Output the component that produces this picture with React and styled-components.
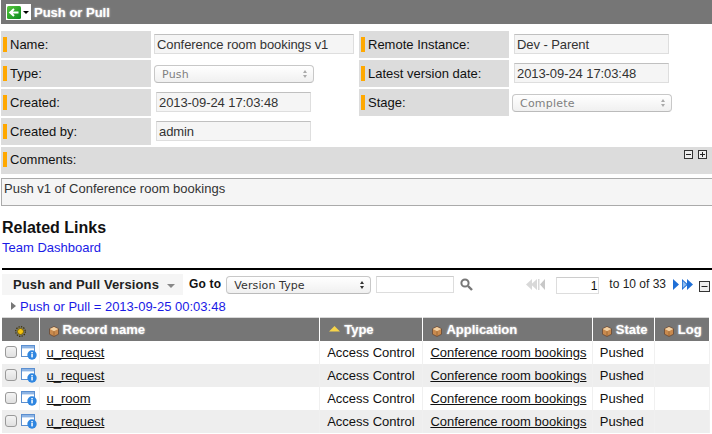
import styled, { createGlobalStyle } from 'styled-components'

const Global = createGlobalStyle`
  html, body { margin: 0; padding: 0; background: #fff; }
  body { width: 712px; height: 434px; overflow: hidden; font-family: "Liberation Sans", Arial, sans-serif; font-size: 13px; color: #111; }
`

const Page = styled.div`
  width: 712px;
  height: 434px;
  overflow: hidden;
  padding-left: 1px;
  box-sizing: border-box;
`

const TitleBar = styled.div`
  display: flex;
  align-items: center;
  height: 24px;
  background: #767676;
  padding-left: 5px;
  color: #fff;
  font-weight: bold;
  font-size: 13px;
  text-shadow: 0 0 2px #ddd;
`

const BackButton = styled.div`
  display: flex;
  align-items: center;
  width: 25px;
  height: 16px;
  background: #fff;
  margin-right: 3px;
`

const Caret = styled.span`
  width: 0;
  height: 0;
  margin-left: 2px;
  border-left: 3px solid transparent;
  border-right: 3px solid transparent;
  border-top: 3px solid #000;
`

const FormGrid = styled.div`
  display: grid;
  grid-template-columns: 150px 208px 150px 1fr;
  grid-auto-rows: 27px;
  row-gap: 2px;
  margin-top: 7px;
`

const Label = styled.div`
  display: flex;
  align-items: center;
  background: #dcdcdc;
  padding-left: 2px;
  box-sizing: border-box;
  ${p => p.$wide && 'grid-column: 1 / -1; position: relative; padding-bottom: 2px;'}
  &::before {
    content: '';
    width: 4px;
    height: 15px;
    background: #ffa800;
    margin-right: 3px;
  }
`

const Cell = styled.div`
  display: flex;
  align-items: flex-start;
  padding-left: ${p => p.$inset}px;
  padding-top: ${p => p.$top ?? 3}px;
`

const ReadOnly = styled.div`
  box-sizing: border-box;
  width: ${p => p.$w}px;
  height: ${p => p.$h ?? 20}px;
  line-height: 19px;
  padding-left: 2px;
  background: #f5f5f5;
  border: 1px solid #dedede;
  border-top-color: #c0c0c0;
  color: #333;
  letter-spacing: -0.08px;
  white-space: nowrap;
`

const MacSelect = styled.div`
  position: relative;
  box-sizing: border-box;
  width: ${p => p.$w}px;
  height: ${p => p.$h ?? 18}px;
  line-height: 17px;
  padding-left: ${p => p.$pad ?? 7}px;
  border: 1px solid #c8c8c8;
  border-bottom-color: #bbb;
  border-radius: 4px;
  background: linear-gradient(#ffffff, #f0f0f0);
  color: ${p => p.$dark ? '#333' : '#808080'};
  font-family: "DejaVu Sans", sans-serif;
  font-size: 11px;
  letter-spacing: ${p => p.$dark ? '0.1px' : '0.2px'};
  white-space: nowrap;
  &::before, &::after {
    content: '';
    position: absolute;
    right: 6px;
    border-left: 2.5px solid transparent;
    border-right: 2.5px solid transparent;
  }
  &::before {
    top: 4px;
    border-bottom: 3px solid ${p => p.$dark ? '#333' : '#aaa'};
  }
  &::after {
    top: 9px;
    border-top: 3px solid ${p => p.$dark ? '#333' : '#aaa'};
  }
`

const Collapsers = styled.div`
  position: absolute;
  right: 5px;
  top: 3px;
  display: flex;
  gap: 5px;
`

const SquareBtn = styled.svg`
  display: block;
  width: 9px;
  height: 9px;
`

const CommentBox = styled.div`
  box-sizing: border-box;
  height: 28px;
  margin: 4px 0 0 0;
  padding: 2px 0 0 2px;
  background: #f5f5f5;
  border-top: 1px solid #aaa;
  border-bottom: 1px solid #aaa;
  border-left: 1px solid #aaa;
  color: #333;
  line-height: 16px;
`

const Related = styled.div`
  margin: 13px 0 0 1px;
`

const RelatedTitle = styled.h2`
  margin: 0;
  font-size: 16px;
  line-height: 18px;
  font-weight: bold;
  color: #111;
`

const BlueLink = styled.a`
  display: block;
  color: #1a1ae6;
  line-height: 16px;
  margin-top: 3px;
`

const ListHeader = styled.div`
  display: flex;
  align-items: flex-start;
  margin: 12px 0 0 1px;
  border-top: 2px solid #000;
  padding-top: 4px;
  height: 23px;
`

const ListTitle = styled.div`
  display: flex;
  flex: none;
  align-items: center;
  box-sizing: border-box;
  width: 181px;
  height: 21px;
  padding-left: 11px;
  background: #f5f5f5;
  font-weight: bold;
  letter-spacing: 0.1px;
  color: #222;
`

const TitleCaret = styled.span`
  width: 0;
  height: 0;
  margin-left: 8px;
  margin-top: 2px;
  border-left: 4px solid transparent;
  border-right: 4px solid transparent;
  border-top: 4px solid #888;
`

const GoTo = styled.span`
  flex: none;
  font-size: 12px;
  font-weight: bold;
  line-height: 18px;
  margin: 1px 5px 0 6px;
  letter-spacing: 0.2px;
  white-space: nowrap;
`

const SelectSlot = styled.div`
  flex: none;
  margin-top: 2px;
`

const SearchInput = styled.div`
  flex: none;
  box-sizing: border-box;
  width: 78px;
  height: 17px;
  margin: 2px 5px 0 5px;
  border: 1px solid #ddd;
  border-top-color: #ccc;
`

const IconSlot = styled.svg`
  display: block;
  flex: none;
  margin-top: ${p => p.$top ?? 0}px;
  margin-left: ${p => p.$left ?? 0}px;
`

const PageInput = styled.div`
  flex: none;
  box-sizing: border-box;
  width: 43px;
  height: 17px;
  margin: 3px 0 0 10px;
  padding-right: 1px;
  border: 1px solid #ddd;
  border-top-color: #ccc;
  text-align: right;
  font-size: 12px;
  line-height: 17px;
`

const PageText = styled.span`
  flex: none;
  margin: 1px 0 0 10px;
  font-size: 12px;
  line-height: 18px;
  color: #222;
  white-space: nowrap;
`

const FilterRow = styled.div`
  display: flex;
  align-items: center;
  height: 16px;
  margin: 1px 0 0 10px;
  color: #1a1ae6;
  &::before {
    content: '';
    margin-right: 4px;
    border-top: 4px solid transparent;
    border-bottom: 4px solid transparent;
    border-left: 5px solid #777;
  }
`

const Table = styled.table`
  table-layout: fixed;
  width: 708px;
  margin: 3px 0 0 1px;
  border-collapse: collapse;
  border-top: 1px solid #d8d8d8;
`

const HeadCell = styled.th`
  height: 23px;
  padding: 0 0 0 ${p => p.$pad ?? 9}px;
  background: #767676;
  border-right: 1px solid #fff;
  color: #fff;
  font-size: 13px;
  text-align: left;
  text-shadow: 0 0 2px #ddd;
  white-space: nowrap;
  & > svg { vertical-align: -3px; margin-right: 4px; }
`

const Row = styled.tr`
  background: ${p => p.$alt ? '#eeeeee' : '#fff'};
`

const DataCell = styled.td`
  height: 23px;
  padding: 0 0 0 ${p => p.$pad ?? 7}px;
  border-right: 1px solid #f0f0f0;
  white-space: nowrap;
  color: #111;
`

const RowTools = styled.div`
  display: flex;
  align-items: center;
  gap: 4px;
`

const Check = styled.span`
  display: block;
  box-sizing: border-box;
  width: 12px;
  height: 12px;
  margin-top: -2px;
  border: 1px solid #999;
  border-radius: 3px;
  background: linear-gradient(#f4f4f4, #e0e0e0);
`

const RowLink = styled.a`
  color: #111;
  text-decoration: underline;
`

function BackArrow() {
  return (
    <svg width="14" height="13" viewBox="0 0 14 13" style={{ display: 'block', marginLeft: 1 }}>
      <defs>
        <linearGradient id="backGreen" x1="0" y1="0" x2="1" y2="1">
          <stop offset="0" stopColor="#58c83c" />
          <stop offset="1" stopColor="#0a8a1e" />
        </linearGradient>
      </defs>
      <rect width="14" height="13" rx="1.5" fill="url(#backGreen)" />
      <path d="M11.5 6.500H4M7 3 3.200 6.500 7 10" fill="none" stroke="#fff" strokeWidth="2" />
    </svg>
  )
}

function BoxIcon() {
  return (
    <svg width="10" height="11" viewBox="0 0 10 11">
      <path d="M5 .5 9.5 2.8v5.4L5 10.5.5 8.2V2.8z" fill="#c98a4e" stroke="#5d4030" strokeWidth=".7" />
      <path d="M.8 3 5 5.2 9.2 3 5 .9z" fill="#f2d0a2" />
      <path d="M5 5.2v5" stroke="#8a5c30" strokeWidth=".7" />
    </svg>
  )
}

function SunIcon() {
  return (
    <svg width="11" height="11" viewBox="0 0 11 11">
      <circle cx="5.5" cy="5.5" r="4.8" fill="none" stroke="#3a3000" strokeWidth="1.2" strokeDasharray="1.3 1.2" />
      <circle cx="5.5" cy="5.5" r="3" fill="#f4c20d" stroke="#6a5500" strokeWidth=".8" />
    </svg>
  )
}

function InfoIcon() {
  return (
    <svg width="16" height="15" viewBox="0 0 16 15" style={{ display: 'block' }}>
      <rect x=".5" y=".5" width="13" height="11" fill="#fff" stroke="#5b8fd0" />
      <rect x="1" y="1" width="12" height="2.4" fill="#8db4e4" />
      <circle cx="11" cy="10" r="4.7" fill="#2f86e0" />
      <rect x="10.3" y="9" width="1.5" height="3.4" fill="#fff" />
      <rect x="10.3" y="7" width="1.5" height="1.4" fill="#fff" />
    </svg>
  )
}

function Square({ plus }) {
  return (
    <SquareBtn viewBox="0 0 9 9">
      <rect x=".5" y=".5" width="8" height="8" fill="#eee" stroke="#333" />
      <path d={plus ? 'M2 4.5h5M4.5 2v5' : 'M2 4.5h5'} stroke="#222" />
    </SquareBtn>
  )
}

const fields = [
  { label: 'Name:', value: 'Conference room bookings v1', w: 200, inset: 3, rightLabel: 'Remote Instance:', rightValue: 'Dev - Parent' },
  { label: 'Type:', select: 'Push', w: 160, inset: 3, rightLabel: 'Latest version date:', rightValue: '2013-09-24 17:03:48' },
  { label: 'Created:', value: '2013-09-24 17:03:48', w: 155, inset: 5, rightLabel: 'Stage:', rightSelect: 'Complete' },
  { label: 'Created by:', value: 'admin', w: 155, inset: 5 },
]

const rows = ['u_request', 'u_request', 'u_room', 'u_request']

export default function App() {
  return (
    <Page>
      <Global />
      <TitleBar>
        <BackButton>
          <BackArrow />
          <Caret />
        </BackButton>
        Push or Pull
      </TitleBar>

      <FormGrid>
        {fields.map(f => (
          <FieldRow key={f.label} f={f} />
        ))}
        <Label $wide>
          Comments:
          <Collapsers>
            <Square />
            <Square plus />
          </Collapsers>
        </Label>
      </FormGrid>
      <CommentBox>Push v1 of Conference room bookings</CommentBox>

      <Related>
        <RelatedTitle>Related Links</RelatedTitle>
        <BlueLink>Team Dashboard</BlueLink>
      </Related>

      <ListHeader>
        <ListTitle>
          Push and Pull Versions
          <TitleCaret />
        </ListTitle>
        <GoTo>Go to</GoTo>
        <SelectSlot>
          <MacSelect $w={145} $dark $pad={7}>Version Type</MacSelect>
        </SelectSlot>
        <SearchInput />
        <IconSlot width="13" height="13" viewBox="0 0 13 13" $top={4} $left={1}>
          <circle cx="5" cy="5" r="3.6" fill="none" stroke="#777" strokeWidth="2" />
          <path d="M8 8l4 4" stroke="#777" strokeWidth="2.4" />
        </IconSlot>
        <IconSlot width="21" height="12" viewBox="0 0 21 12" $top={5} $left={52}>
          <path d="M7 0v11L1 5.500zM12 0v11L6 5.500z" fill="#d8d8d8" />
          <path d="M20 0v11l-5-5.500z" fill="#c8c8c8" />
          <rect x="13" y="0" width="1.500" height="11" fill="#d8d8d8" />
        </IconSlot>
        <PageInput>1</PageInput>
        <PageText>to 10 of 33</PageText>
        <IconSlot width="20" height="12" viewBox="0 0 20 12" $top={5} $left={7}>
          <path d="M0 0v11l6-5.500z" fill="#1f6fd6" />
          <path d="M9 0v11l6-5.500zM14 0v11l6-5.500z" fill="#1f6fd6" />
          <path d="M9.800 2v7l3.800-3.500z" fill="#8fbdf0" />
        </IconSlot>
        <IconSlot width="11" height="11" viewBox="0 0 11 11" $top={7} $left={6}>
          <rect x=".5" y=".5" width="10" height="10" fill="#eee" stroke="#333" />
          <path d="M2.500 5.500h6" stroke="#222" />
        </IconSlot>
      </ListHeader>

      <FilterRow>Push or Pull = 2013-09-25 00:03:48</FilterRow>

      <Table>
        <colgroup>
          <col style={{ width: 37 }} />
          <col style={{ width: 280 }} />
          <col style={{ width: 103 }} />
          <col style={{ width: 169 }} />
          <col style={{ width: 62 }} />
          <col style={{ width: 55 }} />
        </colgroup>
        <thead>
          <tr>
            <HeadCell $pad={13}><SunIcon /></HeadCell>
            <HeadCell><BoxIcon />Record name</HeadCell>
            <HeadCell>
              <svg width="11" height="6" viewBox="0 0 11 6" style={{ verticalAlign: 2 }}>
                <path d="M5.500 0 11 5.500H0z" fill="#f6d44a" />
              </svg>
              Type
            </HeadCell>
            <HeadCell><BoxIcon />Application</HeadCell>
            <HeadCell><BoxIcon />State</HeadCell>
            <HeadCell><BoxIcon />Log</HeadCell>
          </tr>
        </thead>
        <tbody>
          {rows.map((name, i) => (
            <Row key={i} $alt={i % 2 === 1}>
              <DataCell $pad={3}>
                <RowTools>
                  <Check />
                  <InfoIcon />
                </RowTools>
              </DataCell>
              <DataCell><RowLink>{name}</RowLink></DataCell>
              <DataCell>Access Control</DataCell>
              <DataCell><RowLink>Conference room bookings</RowLink></DataCell>
              <DataCell>Pushed</DataCell>
              <DataCell />
            </Row>
          ))}
        </tbody>
      </Table>
    </Page>
  )
}

function FieldRow({ f }) {
  return (
    <>
      <Label>{f.label}</Label>
      <Cell $inset={f.inset} $top={f.select ? 5 : 3}>
        {f.select
          ? <MacSelect $w={160}>{f.select}</MacSelect>
          : <ReadOnly $w={f.w}>{f.value}</ReadOnly>}
      </Cell>
      {f.rightLabel ? <Label>{f.rightLabel}</Label> : <span />}
      {f.rightLabel ? (
        <Cell $inset={f.rightSelect ? 3 : 5} $top={f.rightSelect ? 5 : 3}>
          {f.rightSelect
            ? <MacSelect $w={160}>{f.rightSelect}</MacSelect>
            : <ReadOnly $w={155}>{f.rightValue}</ReadOnly>}
        </Cell>
      ) : <span />}
    </>
  )
}
